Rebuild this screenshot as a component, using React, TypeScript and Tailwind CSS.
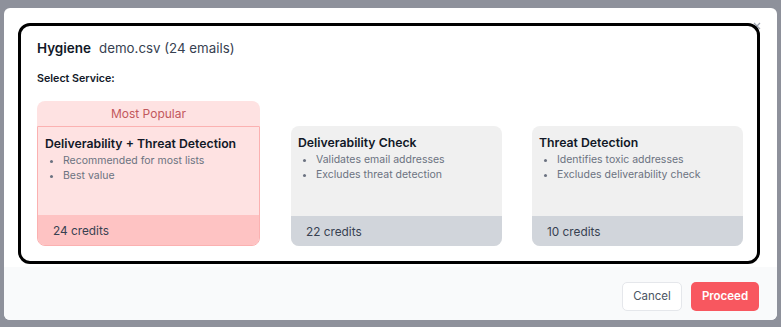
import React from "react";

const cards = [
  {
    title: "Deliverability Check",
    bullets: ["Validates email addresses", "Excludes threat detection"],
    credits: "22 credits",
  },
  {
    title: "Threat Detection",
    bullets: ["Identifies toxic addresses", "Excludes deliverability check"],
    credits: "10 credits",
  },
];

export default function App() {
  return (
    <div
      className="w-[781px] h-[327px] bg-[#8e919b] overflow-hidden pt-[8px] pl-[4px]"
      style={{ fontFamily: "Inter, 'Noto Sans', sans-serif" }}
    >
      <div className="w-[773px] h-[312px] bg-white rounded-[6px] flex flex-col relative">
        <svg
          className="absolute left-[749px] top-[14px]"
          width="8"
          height="8"
          viewBox="0 0 8 8"
          fill="none"
          stroke="#9ca3af"
          strokeWidth="1.2"
        >
          <path d="M1 1L7 7M7 1L1 7" />
        </svg>
        <div className="relative mt-[15px] ml-[14px] w-[742px] h-[241px] border-[3px] border-black rounded-[12px] pl-[16px] pr-[14px] pt-[12px]">
          <div className="flex items-baseline gap-[8px] h-[20px] leading-[20px]">
            <span className="text-[13.5px] font-semibold text-[#111827]">Hygiene</span>
            <span className="text-[13.3px] text-[#374151]">demo.csv (24 emails)</span>
          </div>
          <div className="mt-[13px] text-[10.7px] leading-[16px] font-semibold text-[#111827]">Select Service:</div>
          <div className="mt-[14px] flex items-end">
            <div className="w-[223px] shrink-0 flex flex-col">
              <div className="h-[25px] bg-[#fee2e2] rounded-t-[8px] flex items-center justify-center text-[12px] text-[#c2585d]">
                Most Popular
              </div>
              <div className="h-[120px] bg-[#fee2e2] border border-[#fbb1b1] rounded-b-[8px] flex flex-col overflow-hidden">
                <div className="flex-1 px-[7px] pt-[8px]">
                  <div className="text-[12.25px] leading-[18px] font-semibold text-[#111827]">
                    Deliverability + Threat Detection
                  </div>
                  <ul className="list-disc pl-[18px] text-[10.5px] leading-[15px] text-[#6b7280]">
                    <li>Recommended for most lists</li>
                    <li>Best value</li>
                  </ul>
                </div>
                <div className="h-[30px] bg-[#fec3c3] flex items-center pl-[15px] pt-[4px] text-[11.8px] text-[#374151]">
                  24 credits
                </div>
              </div>
            </div>
            {cards.map((c, i) => (
              <div
                key={c.title}
                className={`w-[211px] shrink-0 h-[120px] bg-[#f0f0f0] rounded-[8px] flex flex-col overflow-hidden ${
                  i === 0 ? "ml-[31px]" : "ml-[30px]"
                }`}
              >
                <div className="flex-1 px-[7px] pt-[8px]">
                  <div className="text-[12.25px] leading-[18px] font-semibold text-[#111827]">{c.title}</div>
                  <ul className="list-disc pl-[18px] text-[10.5px] leading-[15px] text-[#6b7280]">
                    {c.bullets.map((b) => (
                      <li key={b}>{b}</li>
                    ))}
                  </ul>
                </div>
                <div className="h-[30px] bg-[#d1d5db] flex items-center pl-[15px] pt-[4px] text-[11.8px] text-[#374151]">
                  {c.credits}
                </div>
              </div>
            ))}
          </div>
        </div>
        <div className="mt-[3px] flex-1 bg-[#f9fafb] rounded-b-[6px] flex items-start justify-end gap-[9px] pr-[18px] pt-[15px]">
          <button className="w-[60px] h-[29px] bg-white border border-[#e5e7eb] rounded-[5px] text-[11.5px] text-[#4b5563]">
            Cancel
          </button>
          <button className="w-[68px] h-[29px] bg-[#f8575f] rounded-[5px] text-[11.5px] font-semibold text-white">
            Proceed
          </button>
        </div>
      </div>
    </div>
  );
}
